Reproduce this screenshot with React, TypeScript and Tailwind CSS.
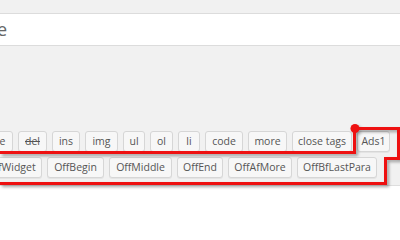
const ROW_ONE = [
  { label: "b-quote", w: "w-[54px]" },
  { label: "del", w: "w-[29px]", strike: true },
  { label: "ins", w: "w-[28px]" },
  { label: "img", w: "w-[33px]" },
  { label: "ul", w: "w-[22px]" },
  { label: "ol", w: "w-[23px]" },
  { label: "li", w: "w-[22px]" },
  { label: "code", w: "w-[38px]" },
  { label: "more", w: "w-[39px]" },
  { label: "close tags", w: "w-[60px]" },
  { label: "Ads1", w: "w-[33px]" },
];

const ROW_TWO = [
  { label: "OffWidget", w: "w-[62px]" },
  { label: "OffBegin", w: "w-[57px]" },
  { label: "OffMiddle", w: "w-[63px]" },
  { label: "OffEnd", w: "w-[46px]" },
  { label: "OffAfMore", w: "w-[64px]" },
  { label: "OffBfLastPara", w: "w-[80px]" },
];

function TagButton({ label, w, strike }: { label: string; w: string; strike?: boolean }) {
  return (
    <button
      className={`${w} h-[21px] shrink-0 rounded-[3px] border border-[#d6d6d6] bg-[#f7f7f7] shadow-[0_1px_0_#e4e4e4] text-[10.5px] leading-none text-[#555] whitespace-nowrap flex items-center justify-center ${
        strike ? "line-through" : ""
      }`}
    >
      {label}
    </button>
  );
}

export default function App() {
  return (
    <main
      className="relative w-[400px] h-[240px] overflow-hidden bg-white"
      style={{ fontFamily: '"Open Sans", "Liberation Sans", sans-serif' }}
    >
      {/* Title field */}
      <div className="h-[126px] bg-[#f1f1f1] pt-[13px]">
        <div className="h-[33px] bg-white border-y border-[#dcdcdc] flex items-center">
          <div className="w-[7px] overflow-hidden flex justify-end">
            <span className="shrink-0 whitespace-nowrap text-[18px] text-[#666]">Enter title here</span>
          </div>
        </div>
      </div>

      {/* Quicktags toolbar */}
      <div className="h-[60px] bg-[#f1f1f1] border-b border-[#dedede] pt-[5px] flex flex-col gap-[5px]">
        <div className="flex gap-[5px] -ml-[41px]">
          {ROW_ONE.map((b) => (
            <TagButton key={b.label} {...b} />
          ))}
        </div>
        <div className="flex gap-[5px] -ml-[20px]">
          {ROW_TWO.map((b) => (
            <TagButton key={b.label} {...b} />
          ))}
        </div>
      </div>

      {/* red annotation */}
      <svg
        className="absolute inset-0 pointer-events-none drop-shadow-[2px_2px_1.5px_rgba(0,0,0,0.35)]"
        width="400"
        height="240"
        viewBox="0 0 400 240"
      >
        <path
          d="M-5 152.5 H354.5 V128.5 H398.5 V158.5 H385.5 V183.5 H-5"
          fill="none"
          stroke="#ee1111"
          strokeWidth="3"
          strokeLinejoin="miter"
        />
        <circle cx="355" cy="128.5" r="4.5" fill="#ee1111" />
      </svg>
    </main>
  );
}
